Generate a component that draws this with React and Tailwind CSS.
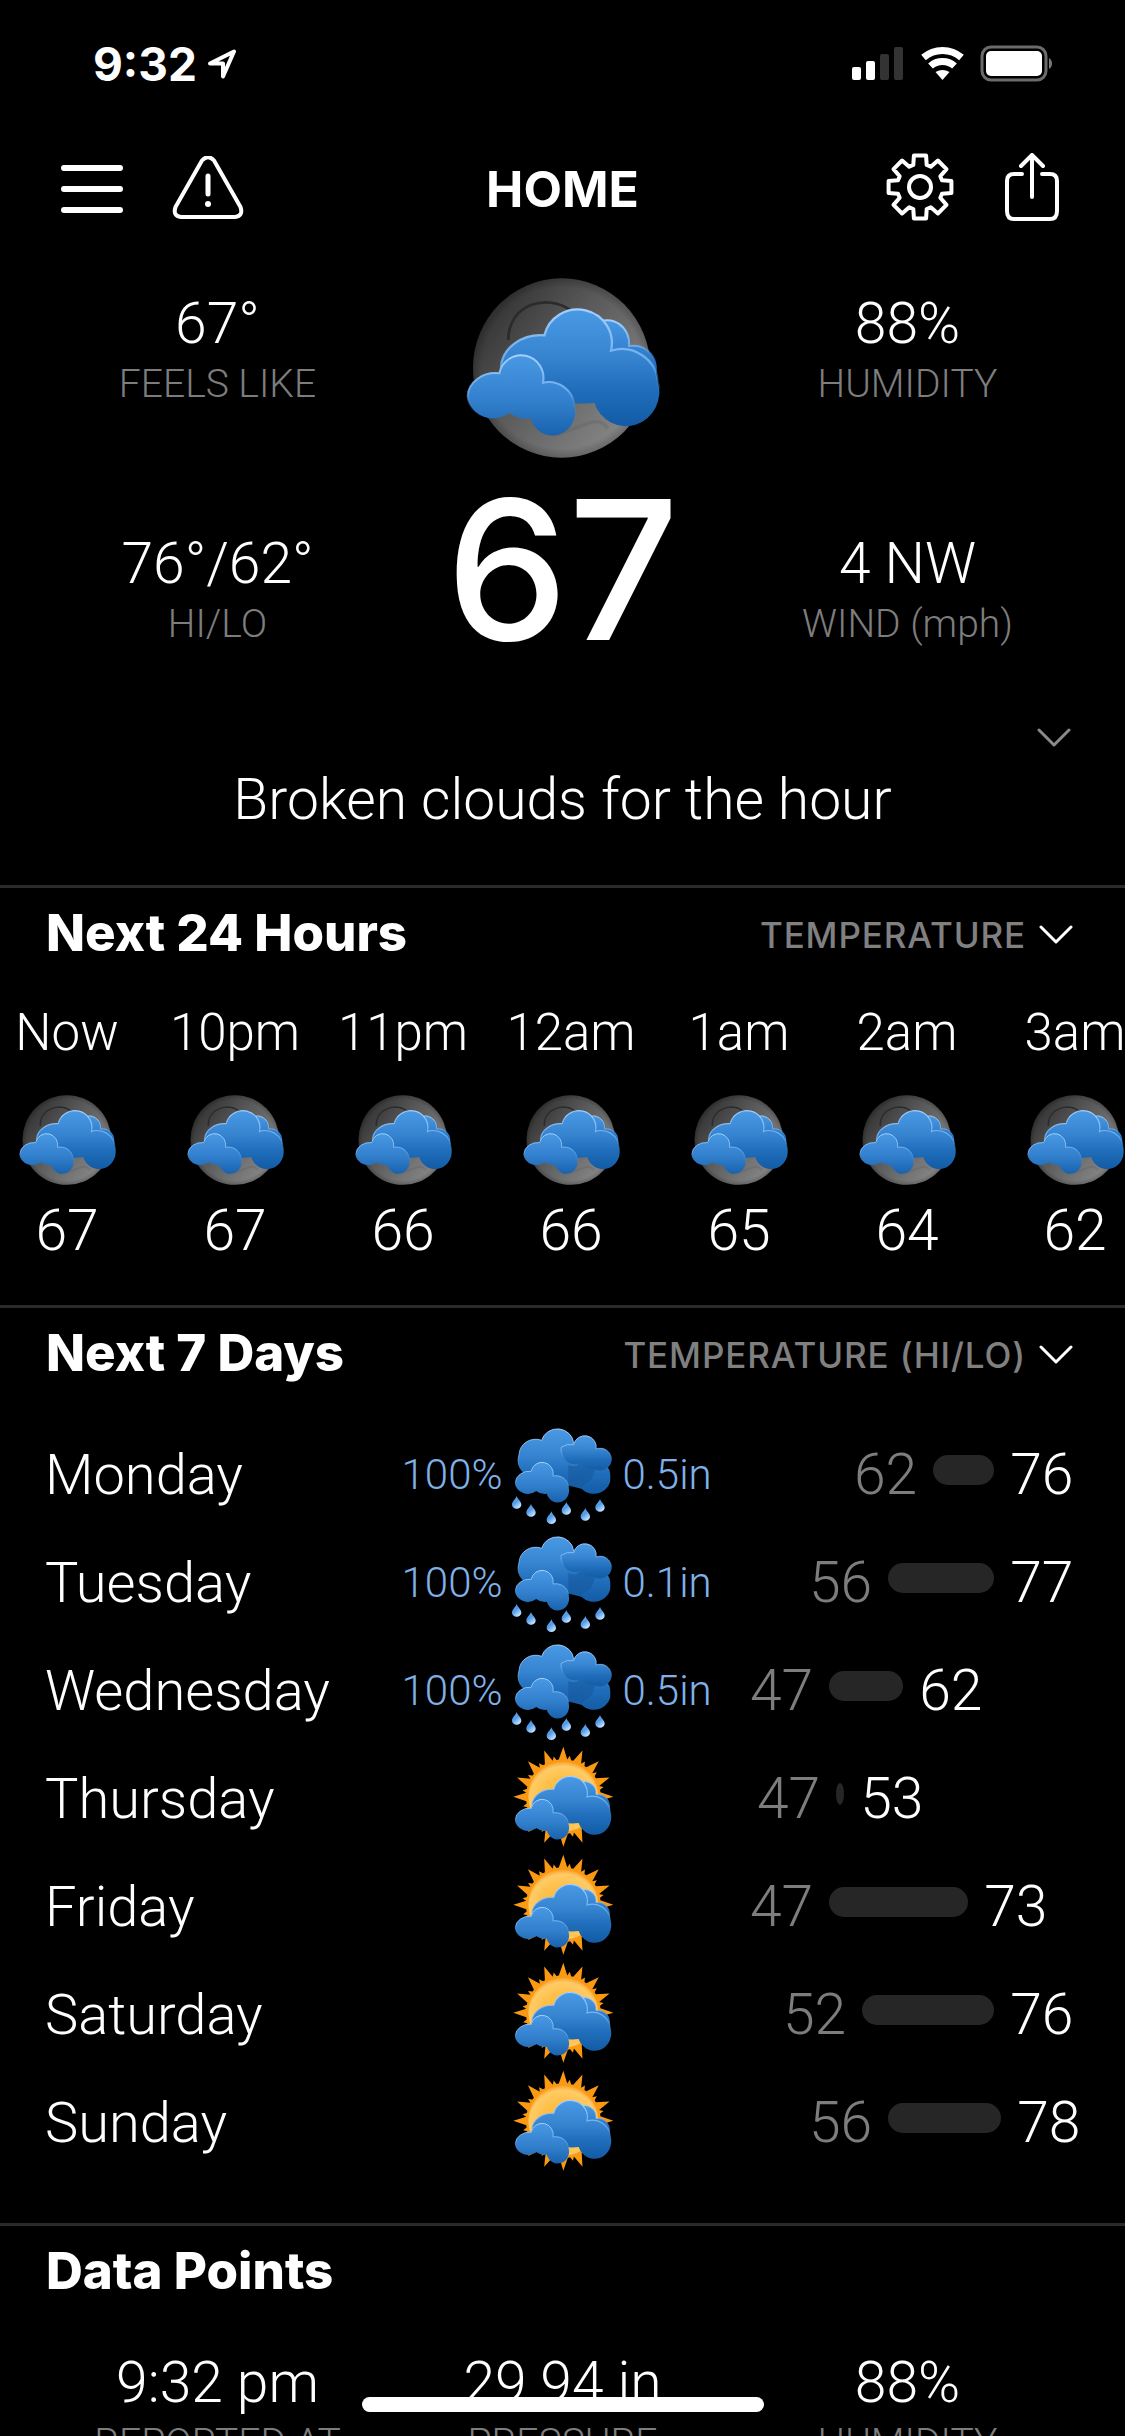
import React, { useState } from 'react';

const hours = [
  { label: 'Now', temp: 67 },
  { label: '10pm', temp: 67 },
  { label: '11pm', temp: 66 },
  { label: '12am', temp: 66 },
  { label: '1am', temp: 65 },
  { label: '2am', temp: 64 },
  { label: '3am', temp: 62 },
];

const days = [
  { name: 'Monday', icon: 'rain', chance: '100%', amount: '0.5in', lo: 62, hi: 76, start: 104, span: 61 },
  { name: 'Tuesday', icon: 'rain', chance: '100%', amount: '0.1in', lo: 56, hi: 77, start: 59, span: 106 },
  { name: 'Wednesday', icon: 'rain', chance: '100%', amount: '0.5in', lo: 47, hi: 62, start: 0, span: 74 },
  { name: 'Thursday', icon: 'sun', lo: 47, hi: 53, start: 7, span: 8 },
  { name: 'Friday', icon: 'sun', lo: 47, hi: 73, start: 0, span: 139 },
  { name: 'Saturday', icon: 'sun', lo: 52, hi: 76, start: 33, span: 132 },
  { name: 'Sunday', icon: 'sun', lo: 56, hi: 78, start: 59, span: 113 },
];

const polar = (cx, cy, r, deg) => {
  const a = (deg * Math.PI) / 180;
  return `${(cx + r * Math.sin(a)).toFixed(1)},${(cy - r * Math.cos(a)).toFixed(1)}`;
};

const gearPoints = Array.from({ length: 8 }, (_, i) => {
  const a = i * 45;
  return [polar(34, 34, 23, a - 17), polar(34, 34, 32, a - 11), polar(34, 34, 32, a + 11), polar(34, 34, 23, a + 17)].join(' ');
}).join(' ');

const sunPoints = Array.from({ length: 16 }, (_, i) => {
  const a = i * 22.5;
  return [
    polar(247, 218, 112, a - 7),
    polar(247, 218, 150, a),
    polar(247, 218, 112, a + 6),
    polar(247, 218, 124, a + 9),
    polar(247, 218, 112, a + 12),
  ].join(' ');
}).join(' ');

const Gradients = () => (
  <svg className="absolute h-0 w-0" aria-hidden="true">
    <defs>
      <linearGradient id="moon" x1="0.05" y1="0.3" x2="0.8" y2="0.9">
        <stop offset="0" stopColor="#383838" />
        <stop offset="0.4" stopColor="#5a5a5a" />
        <stop offset="1" stopColor="#858585" />
      </linearGradient>
      <radialGradient id="moonEdge">
        <stop offset="0.9" stopColor="#000" stopOpacity="0" />
        <stop offset="1" stopColor="#000" stopOpacity="0.2" />
      </radialGradient>
      <linearGradient id="cloud" x1="0" y1="0" x2="0" y2="1">
        <stop offset="0" stopColor="#4a99e5" />
        <stop offset="0.4" stopColor="#3785d1" />
        <stop offset="0.7" stopColor="#1f6dba" />
        <stop offset="1" stopColor="#135ba5" />
      </linearGradient>
      <linearGradient id="cloudFront" x1="0" y1="0" x2="0" y2="1">
        <stop offset="0" stopColor="#4998e4" />
        <stop offset="0.55" stopColor="#3381ce" />
        <stop offset="1" stopColor="#1962ae" />
      </linearGradient>
      <linearGradient id="rim" x1="0" y1="0" x2="0" y2="1">
        <stop offset="0" stopColor="#a3cffd" />
        <stop offset="0.45" stopColor="#7ab7f4" stopOpacity="0.8" />
        <stop offset="0.75" stopColor="#2f80cf" stopOpacity="0" />
      </linearGradient>
      <radialGradient id="sunBody" cx="0.5" cy="0.55" r="0.55">
        <stop offset="0" stopColor="#ffb52e" />
        <stop offset="0.6" stopColor="#ffc04a" />
        <stop offset="0.88" stopColor="#ffcb66" />
        <stop offset="1" stopColor="#f8a32c" />
      </radialGradient>
      <linearGradient id="drop" x1="0" y1="0" x2="0.6" y2="1">
        <stop offset="0" stopColor="#7dbbf6" />
        <stop offset="0.5" stopColor="#4d98e8" />
        <stop offset="1" stopColor="#c4e2ff" />
      </linearGradient>
    </defs>
  </svg>
);

const FrontCloud = () => (
  <path
    d="M295 340A65 66 0 0 1 426 368A78 74 0 0 1 520 438A66 68 0 0 1 389 475Q352 480 325 458A76 72 0 0 1 200 408A84 72 0 0 1 295 340Z"
    fill="url(#cloudFront)"
    stroke="url(#rim)"
    strokeWidth="6"
  />
);

const CloudPair = () => (
  <g>
    <path
      d="M585 190A66 70 0 0 1 684 258A72 68 0 0 1 762 350L640 350Z"
      fill="url(#cloudFront)"
      stroke="url(#rim)"
      strokeWidth="6"
    />
    <path
      d="M300 320A120 100 0 0 1 430 226A100 98 0 0 1 630 272A108 104 0 0 1 770 365A98 100 0 0 1 580 428Q550 432 520 430L340 420Z"
      fill="url(#cloud)"
      stroke="url(#rim)"
      strokeWidth="7"
    />
    <FrontCloud />
  </g>
);

const MoonCloud = ({ className }) => (
  <svg viewBox="195 54 582 540" className={className} aria-hidden="true">
    <ellipse cx="482" cy="324" rx="266" ry="269" fill="url(#moon)" />
    <ellipse cx="482" cy="324" rx="266" ry="269" fill="url(#moonEdge)" />
    <path d="M322 240C322 130 440 100 510 152" fill="none" stroke="#2b2b2b" strokeWidth="8" />
    <path d="M415 500Q440 535 480 520T560 490T620 505" fill="none" stroke="#5d5d5d" strokeWidth="10" opacity="0.3" />
    <CloudPair />
  </svg>
);

const SunCloud = () => (
  <svg viewBox="84 63 324 324" className="h-[108px] w-[108px]" aria-hidden="true">
    <polygon points={sunPoints} fill="#fb9a12" />
    <circle cx="247" cy="218" r="105" fill="url(#sunBody)" />
    <g transform="translate(3 83) scale(0.5)">
      <CloudPair />
    </g>
  </svg>
);

const drops = [[107, 308], [150, 332], [211, 354], [256, 326], [313, 344], [357, 317]];

const RainCloud = () => (
  <svg viewBox="84 63 324 324" className="h-[108px] w-[108px]" aria-hidden="true">
    <path
      d="M182 121A49 47 0 0 1 278 130L330 180Q388 185 388 230A50 46 0 0 1 301 266Q280 262 262 256L150 230A50 50 0 0 1 114 165A50 48 0 0 1 182 121Z"
      fill="url(#cloud)"
      stroke="url(#rim)"
      strokeWidth="3"
    />
    <path d="M262 195Q285 205 296 190Q318 212 346 203L330 240L300 262L262 258Z" fill="#16589c" opacity="0.6" />
    <path
      d="M240 142Q258 130 278 134A34 33 0 0 1 345 147A35 35 0 0 1 392 178A34 34 0 0 1 340 206Q318 212 296 190A38 38 0 0 1 247 170Q238 158 240 142Z"
      fill="url(#cloud)"
      stroke="url(#rim)"
      strokeWidth="3"
    />
    <g transform="translate(3 44) scale(0.5)">
      <FrontCloud />
    </g>
    {drops.map(([x, y]) => (
      <path
        key={x}
        transform={`translate(${x} ${y})`}
        d="M0 -20C4 -8 14 -4 14 6A14 12 0 0 1 -14 6C-14 -4 -4 -8 0 -20Z"
        fill="url(#drop)"
      />
    ))}
  </svg>
);

const Chevron = ({ className }) => (
  <svg viewBox="0 0 36 20" className={className} fill="none" stroke="currentColor" strokeWidth="3" strokeLinecap="round" strokeLinejoin="round" aria-hidden="true">
    <path d="M3 2L18 17L33 2" />
  </svg>
);

const StatusBar = () => (
  <div className="flex h-[128px] shrink-0 items-center justify-between pr-[72px] pl-[93px]">
    <div className="flex items-center gap-[10px]">
      <span className="font-['Inter',sans-serif] text-[46px] leading-[64px] font-bold">9:32</span>
      <svg viewBox="0 0 30 30" className="h-[30px] w-[30px]" fill="none" stroke="#fff" strokeWidth="4" strokeLinejoin="round" aria-hidden="true">
        <path d="M27 2.5L16 27.5V14.5H3Z" />
      </svg>
    </div>
    <svg viewBox="0 0 202 38" className="h-[38px] w-[202px]" aria-hidden="true">
      <rect x="1" y="22" width="9" height="13" rx="2" fill="#fff" />
      <rect x="15" y="16" width="9" height="19" rx="2" fill="#fff" />
      <rect x="29" y="9" width="9" height="26" rx="2" fill="#333" />
      <rect x="43" y="2" width="9" height="33" rx="2" fill="#333" />
      <g transform="translate(91.500 35)" fill="none" stroke="#fff" strokeWidth="7">
        <path d="M-19 -22.500A29 29 0 0 1 19 -22.500" />
        <path d="M-12 -14A18 18 0 0 1 12 -14" />
        <path d="M0 0L-7 -8Q0 -12 7 -8Z" fill="#fff" stroke="none" />
      </g>
      <rect x="131" y="2" width="64" height="33" rx="9" fill="none" stroke="#6b6b6b" strokeWidth="3" />
      <rect x="135" y="6" width="56" height="25" rx="5" fill="#fff" />
      <path d="M198 13Q201 15 201 18.500T198 24Z" fill="#7a7a7a" />
    </svg>
  </div>
);

const TopBar = () => (
  <header className="grid h-[122px] shrink-0 grid-cols-3 items-center px-[60px]">
    <div className="flex items-center gap-12 pb-[2px]">
      <button type="button" aria-label="Menu">
        <svg viewBox="0 0 64 64" className="h-16 w-16" stroke="#fff" strokeWidth="6" strokeLinecap="round">
          <path d="M4 12H60M4 33H60M4 54H60" />
        </svg>
      </button>
      <button type="button" aria-label="Alerts">
        <svg viewBox="0 0 72 64" className="h-16 w-[72px]" fill="none" stroke="#fff" strokeWidth="4" strokeLinecap="round" strokeLinejoin="round">
          <path d="M30 4.500Q36 -2 42 4.500L68.500 51Q71.500 60 63 61H9Q0.500 60 3.500 51Z" />
          <path d="M36 20V38" strokeWidth="5" />
          <circle cx="36" cy="48" r="3" fill="#fff" stroke="none" />
        </svg>
      </button>
    </div>
    <h1 className="text-center font-['Inter',sans-serif] text-[50px] leading-[64px] font-bold">HOME</h1>
    <div className="flex items-center justify-end gap-[50px] pr-[5px] pb-1">
      <button type="button" aria-label="Settings">
        <svg viewBox="0 0 68 68" className="h-[68px] w-[68px]" fill="none" stroke="#fff" strokeWidth="4" strokeLinejoin="round">
          <polygon points={gearPoints} />
          <circle cx="34" cy="34" r="11" />
        </svg>
      </button>
      <button type="button" aria-label="Share">
        <svg viewBox="0 0 56 68" className="h-[68px] w-[56px]" fill="none" stroke="#fff" strokeWidth="4" strokeLinecap="round" strokeLinejoin="round">
          <path d="M18 21H10Q3 21 3 28V58Q3 66 10 66H46Q53 66 53 58V28Q53 21 46 21H38" />
          <path d="M28 2V44M17 13L28 2L39 13" />
        </svg>
      </button>
    </div>
  </header>
);

const Stat = ({ value, label }) => (
  <div className="flex flex-col items-center gap-1 whitespace-nowrap">
    <div className="text-[57px] leading-[64px]">{value}</div>
    <div className="text-[39px] leading-[48px] text-[#7d7d7d]">{label}</div>
  </div>
);

const SectionHeader = ({ title, options, name }) => {
  const [value, setValue] = useState(options ? options[0] : '');

  return (
    <div className="flex items-center justify-between pr-[51px] pl-[46px] font-['Inter',sans-serif]">
      <h2 className="text-[51px] leading-[64px] font-extrabold">{title}</h2>
      {options && (
        <label className="flex items-center gap-3 pt-1">
          <select
            aria-label={name}
            value={value}
            onChange={(e) => setValue(e.target.value)}
            className="field-sizing-content appearance-none bg-transparent text-right text-[35px] leading-[48px] font-medium tracking-wide text-[#808080]"
          >
            {options.map((o) => <option key={o}>{o}</option>)}
          </select>
          <Chevron className="h-5 w-9" />
        </label>
      )}
    </div>
  );
};

const DayRow = ({ day }) => (
  <li className="grid h-[108px] grid-cols-3 items-center text-[57px] leading-[64px]">
    <span className="pl-[45px] text-[56px]">{day.name}</span>
    <div className="grid grid-cols-[1fr_108px_1fr] items-center gap-[6px] text-[42px] text-[#7fb1e8]">
      <span className="text-right">{day.chance}</span>
      {day.icon === 'rain' ? <RainCloud /> : <SunCloud />}
      <span>{day.amount}</span>
    </div>
    <div className="flex items-center gap-4">
      <span className="text-[#7d7d7d]" style={{ marginLeft: day.start }}>{day.lo}</span>
      <span
        className={day.span < 20 ? 'mb-[10px] h-[22px] rounded-[50%] bg-[#262626]' : 'mb-[10px] h-[30px] rounded-full bg-[#262626]'}
        style={{ width: day.span }}
      />
      <span>{day.hi}</span>
    </div>
  </li>
);

const App = () => (
  <div className="relative flex h-screen flex-col overflow-hidden bg-black font-['Roboto',sans-serif] font-light text-white">
    <Gradients />
    <StatusBar />
    <TopBar />

    <main className="min-h-0 flex-1 overflow-y-auto [scrollbar-width:none]">
      <section className="pt-[28px] pb-[53px]">
        <div className="grid grid-cols-3 px-[45px]">
          <div className="flex flex-col gap-[124px] pt-[14px]">
            <Stat value="67°" label="FEELS LIKE" />
            <Stat value="76°/62°" label="HI/LO" />
          </div>
          <div className="flex flex-col items-center gap-4">
            <MoonCloud className="h-[180px] w-[194px]" />
            <div className="font-['Inter',sans-serif] text-[194px] leading-[192px] font-medium">67</div>
          </div>
          <div className="flex flex-col gap-[124px] pt-[14px]">
            <Stat value="88%" label="HUMIDITY" />
            <Stat value="4 NW" label="WIND (mph)" />
          </div>
        </div>
        <div className="mt-14 flex justify-end pr-[53px]">
          <button type="button" aria-label="Show details" className="flex h-8 items-center text-[#8a8a8a]">
            <Chevron className="h-5 w-9" />
          </button>
        </div>
        <p className="mt-[14px] text-center text-[57px] leading-[64px]">Broken clouds for the hour</p>
      </section>

      <section className="border-t-3 border-[#2b2b2b] pt-[13px] pb-[42px]">
        <SectionHeader title="Next 24 Hours" name="Hourly data" options={['TEMPERATURE', 'HUMIDITY', 'WIND']} />
        <ul className="mt-9 flex gap-[34px] overflow-hidden">
          {hours.map((h) => (
            <li key={h.label} className="flex w-[134px] shrink-0 flex-col items-center">
              <span className="text-[51px] leading-[64px]">{h.label}</span>
              <MoonCloud className="mt-[30px] h-[90px] w-[97px]" />
              <span className="mt-[14px] text-[57px] leading-[64px]">{h.temp}</span>
            </li>
          ))}
        </ul>
      </section>

      <section className="border-t-3 border-[#2b2b2b] pt-[13px] pb-[46px]">
        <SectionHeader title="Next 7 Days" name="Daily data" options={['TEMPERATURE (HI/LO)', 'HUMIDITY', 'WIND']} />
        <ul className="mt-9">
          {days.map((d) => <DayRow key={d.name} day={d} />)}
        </ul>
      </section>

      <section className="border-t-3 border-[#2b2b2b] pt-[13px] pb-24">
        <SectionHeader title="Data Points" />
        <div className="mt-12 grid grid-cols-3 px-[45px]">
          <Stat value="9:32 pm" label="REPORTED AT" />
          <Stat value="29.94 in" label="PRESSURE" />
          <Stat value="88%" label="HUMIDITY" />
        </div>
      </section>
    </main>

    <div className="absolute bottom-6 left-1/2 h-[15px] w-[402px] -translate-x-1/2 rounded-full bg-white" />
  </div>
);

export default App;
